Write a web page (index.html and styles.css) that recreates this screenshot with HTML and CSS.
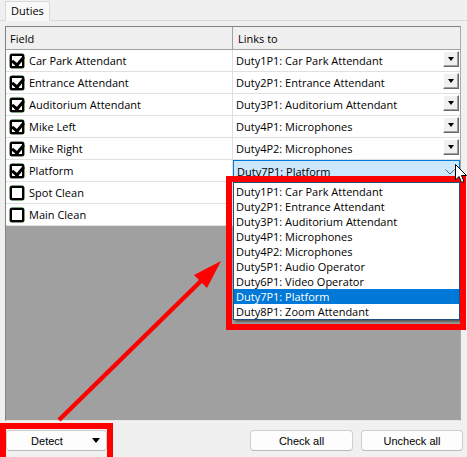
FILE: index.html
```html
<!DOCTYPE html>
<html>
<head>
<meta charset="utf-8">
<link rel="stylesheet" href="styles.css">
</head>
<body>
<div class="win">
  <div class="tabs"><div class="tab">Duties</div></div>
  <div class="grid">
    <div class="row head"><div class="c1">Field</div><div class="c2">Links to</div></div>
    <div class="row"><div class="c1"><span class="cb on"></span>Car Park Attendant</div><div class="c2"><span class="val">Duty1P1: Car Park Attendant</span><span class="ddb"></span></div></div>
    <div class="row"><div class="c1"><span class="cb on"></span>Entrance Attendant</div><div class="c2"><span class="val">Duty2P1: Entrance Attendant</span><span class="ddb"></span></div></div>
    <div class="row"><div class="c1"><span class="cb on"></span>Auditorium Attendant</div><div class="c2"><span class="val">Duty3P1: Auditorium Attendant</span><span class="ddb"></span></div></div>
    <div class="row"><div class="c1"><span class="cb on"></span>Mike Left</div><div class="c2"><span class="val">Duty4P1: Microphones</span><span class="ddb"></span></div></div>
    <div class="row"><div class="c1"><span class="cb on"></span>Mike Right</div><div class="c2"><span class="val">Duty4P2: Microphones</span><span class="ddb"></span></div></div>
    <div class="row"><div class="c1"><span class="cb on"></span>Platform</div><div class="c2 edit"><span class="combo"><span class="val">Duty7P1: Platform</span><svg class="chev" width="10" height="6" viewBox="0 0 10 6"><polyline points="0.5,0.5 5,5 9.5,0.5" fill="none" stroke="#606060" stroke-width="1"/></svg></span></div></div>
    <div class="row"><div class="c1"><span class="cb"></span>Spot Clean</div><div class="c2"></div></div>
    <div class="row"><div class="c1"><span class="cb"></span>Main Clean</div><div class="c2"></div></div>
    <div class="fill"></div>
  </div>
  <div class="bottom">
    <button class="btn detect"><span class="lbl">Detect</span><span class="tri"></span></button>
    <button class="btn check">Check all</button>
    <button class="btn uncheck">Uncheck all</button>
  </div>

  <div class="list">
    <div class="item">Duty1P1: Car Park Attendant</div>
    <div class="item">Duty2P1: Entrance Attendant</div>
    <div class="item">Duty3P1: Auditorium Attendant</div>
    <div class="item">Duty4P1: Microphones</div>
    <div class="item">Duty4P2: Microphones</div>
    <div class="item">Duty5P1: Audio Operator</div>
    <div class="item">Duty6P1: Video Operator</div>
    <div class="item sel">Duty7P1: Platform</div>
    <div class="item">Duty8P1: Zoom Attendant</div>
  </div>
  <div class="red red-list"></div>
  <div class="red red-detect"></div>
  <svg class="arrow" width="467" height="457" viewBox="0 0 467 457">
    <line x1="59" y1="420" x2="203" y2="279" stroke="#ff0000" stroke-width="4.5"/>
    <polygon points="221,261 194,275 207,288" fill="#ff0000"/>
  </svg>
  <svg class="cursor" width="13" height="20" viewBox="0 0 13 20">
    <path d="M0.5,0.5 L0.5,16 L4,12.5 L6.5,18.5 L9,17.5 L6.5,11.5 L11.5,11.5 Z" fill="#fff" stroke="#000" stroke-width="1"/>
  </svg>
</div>
</body>
</html>
```
FILE: styles.css
```css
* { box-sizing: border-box; }
html, body { margin: 0; padding: 0; }
body {
  background: #f0f0f0;
  font-family: "Open Sans", "Noto Sans", sans-serif;
  font-size: 11px;
  color: #000;
}
.win {
  position: relative;
  width: 467px;
  height: 457px;
  overflow: hidden;
  background: #f0f0f0;
  display: flex;
  flex-direction: column;
}
.tabs {
  height: 21px;
  border-bottom: 1px solid #dadada;
  padding-left: 5px;
  padding-top: 1px;
  display: flex;
}
.tab {
  width: 45px;
  height: 20px;
  background: #f9f9f9;
  border: 1px solid #d9d9d9;
  border-bottom: none;
  padding-left: 5px;
  line-height: 18px;
  margin-bottom: -1px;
}
.grid {
  margin: 5px 0 0 5px;
  width: 456px;
  height: 395px;
  border: 1px solid #828282;
  border-right-color: #a8a8a8;
  border-bottom-color: #e8e8e8;
  display: flex;
  flex-direction: column;
  background: #a0a0a0;
}
.row {
  display: flex;
  height: 22px;
  background: #fff;
  border-bottom: 1px solid #e0e0e0;
}
.row.head {
  height: 23px;
  background: #f0f0f0;
  border-bottom: 1px solid #a0a0a0;
}
.c1 {
  width: 227px;
  border-right: 1px solid #e0e0e0;
  display: flex;
  align-items: center;
  padding-left: 4px;
}
.head .c1 { border-right-color: #a0a0a0; }
.head .c2 { padding-left: 5px; }
.c2 {
  flex: 1;
  display: flex;
  align-items: flex-start;
  padding-left: 3px;
  position: relative;
}
.head .c1, .head .c2 { align-items: center; }
.c2 .val {
  flex: 1;
  line-height: 21px;
  white-space: nowrap;
}
.ddb {
  width: 16px;
  height: 16px;
  margin: 1px 1px 0 0;
  background: #f0f0f0;
  border-top: 1px solid #fff;
  border-left: 1px solid #fff;
  border-right: 1px solid #696969;
  border-bottom: 1px solid #696969;
  box-shadow: inset -1px -1px 0 #a0a0a0;
  position: relative;
}
.ddb::after {
  content: "";
  position: absolute;
  left: 4px;
  top: 5px;
  border-left: 3.5px solid transparent;
  border-right: 3.5px solid transparent;
  border-top: 4px solid #000;
}
.c2.edit { padding-left: 0; }
.combo {
  flex: 1;
  height: 22px;
  margin-top: 0;
  background: #cce8ff;
  border: 1px solid #0078d7;
  display: flex;
  align-items: center;
  padding-left: 3px;
  padding-right: 4px;
}
.combo .val { line-height: 19px; }
.chev { margin-top: 1px; }
.cb {
  width: 14px;
  height: 14px;
  margin-right: 5px;
  border: 2px solid #000;
  border-radius: 2px;
  background: #fff;
  box-shadow: 0 0 0 0.5px #0b3d0b;
  position: relative;
  flex: none;
}
.cb.on::after {
  content: "";
  position: absolute;
  left: 2px;
  top: -2px;
  width: 5px;
  height: 9px;
  border-right: 3px solid #000;
  border-bottom: 3px solid #000;
  transform: rotate(40deg);
  transform-origin: center;
}
.fill { flex: 1; background: #a0a0a0; }
.bottom {
  flex: 1;
  display: flex;
  align-items: flex-start;
  padding-top: 9px;
  padding-right: 4px;
}
.btn {
  height: 21px;
  background: #fdfdfd;
  border: 1px solid #cfcfcf;
  border-bottom-color: #b8b8b8;
  border-radius: 4px;
  font-family: "Liberation Sans", Arial, sans-serif;
  font-size: 11px;
  color: #000;
  padding: 0;
}
.detect {
  width: 101px;
  margin-left: 6px;
  display: flex;
  align-items: center;
  padding-left: 20px;
}
.detect .lbl { width: 40px; text-align: center; }
.tri {
  margin-left: 25px;
  width: 0;
  height: 0;
  border-left: 4.5px solid transparent;
  border-right: 4.5px solid transparent;
  border-top: 5px solid #000;
}
.check { width: 103px; margin-left: auto; }
.uncheck { width: 102px; margin-left: 8px; }
.list {
  position: absolute;
  left: 233px;
  top: 182px;
  width: 227px;
  height: 138px;
  background: #fff;
  border: 1px solid #1f4f80;
  padding-top: 1px;
  box-shadow: 2px 2px 2px rgba(0,0,0,0.45);
}
.item {
  height: 15px;
  line-height: 15px;
  padding-left: 2px;
  white-space: nowrap;
}
.item.sel { background: #0078d7; color: #fff; }
.red {
  position: absolute;
  border: 6px solid #ff0000;
}
.red-list { left: 226px; top: 176px; width: 240px; height: 154px; }
.red-detect { left: 0; top: 423px; width: 113px; height: 40px; }
.arrow { position: absolute; left: 0; top: 0; }
.cursor { position: absolute; left: 455px; top: 164px; }
```
